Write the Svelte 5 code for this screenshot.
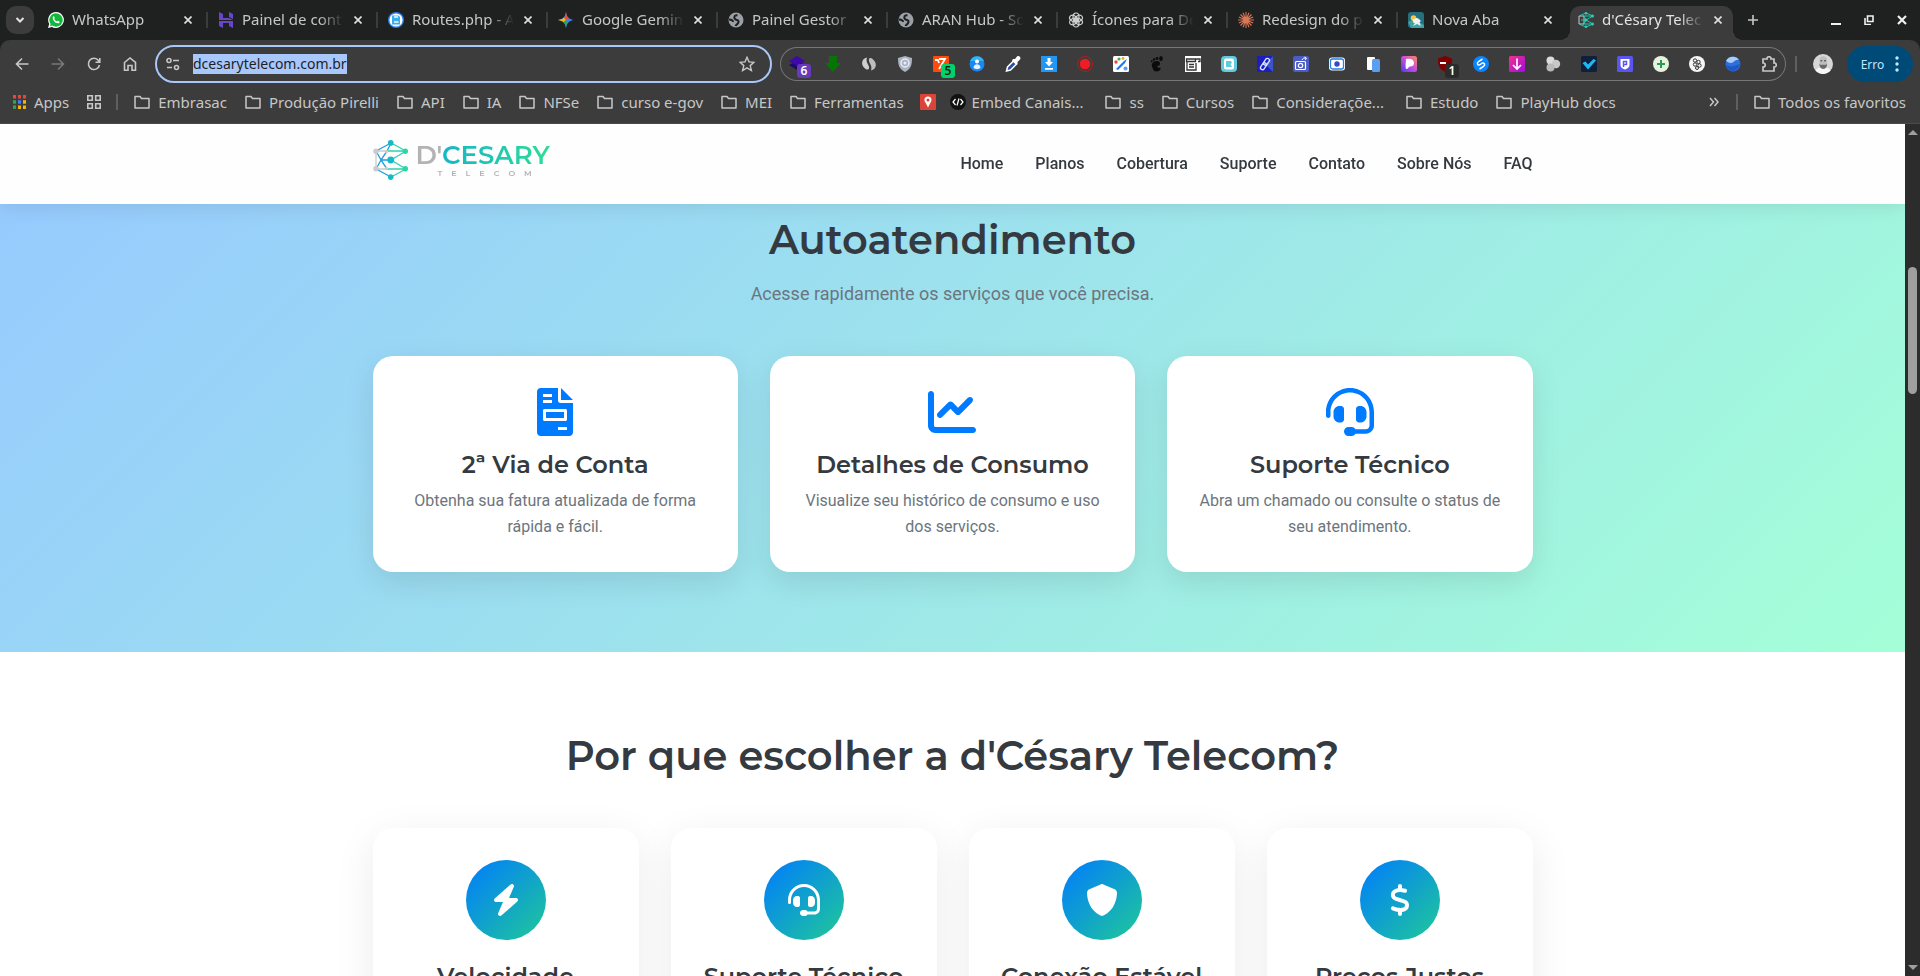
<script>
  import { onMount } from 'svelte';

  const globe =
    '<circle cx="8" cy="8" r="7.500" fill="#9aa0a6"/><path d="M9.500 3.500c-3-1-4 2-2.500 3.500s4 .5 3.500 3-2.500 2.500-3 4M1 7.500c2 0 4 .5 4 2.500" fill="none" stroke="#1f2020" stroke-width="2"/>';

  // 16x16 favicon markup per tab.
  const tabs = [
    {
      title: 'WhatsApp',
      icon: '<path d="M8 0a8 8 0 1 1-4 15L0 16l1.200-4A8 8 0 0 1 8 0z" fill="#fff"/><path d="M8 1.300A6.700 6.700 0 1 1 4.300 13.600l-2.400.6.700-2.300A6.700 6.700 0 0 1 8 1.300z" fill="#12b83c"/><path d="M5 4.500c1-1 1.500.7 1.800 1.600L6.200 7c.6 1.200 1.500 2 2.700 2.600l.9-.9c1 .4 2.600.9 1.600 2C9 13 3.500 8 5 4.500z" fill="#fff"/>'
    },
    {
      title: 'Painel de cont',
      icon: '<path d="M1 0l4 2v4h6l4 2H1zM11 0l4 2v5l-4-2zM1 9h14v7l-4-2v-3H5v5l-4-2z" fill="#6747c7"/>'
    },
    {
      title: 'Routes.php - A',
      icon: '<circle cx="8" cy="8" r="8" fill="#2b7de9"/><circle cx="8" cy="8" r="6.600" fill="#fff"/><path d="M4 3.500h6.500L12 5v7.500H4z" fill="#3aaee8"/><path d="M6 3.500h4V6H6zM6 9h4.500v2H6z" fill="#bfe6fa"/>'
    },
    {
      title: 'Google Gemin',
      icon: '<path d="M8 0c.8 5 3 7.200 8 8-5 .8-7.200 3-8 8-.8-5-3-7.200-8-8 5-.8 7.200-3 8-8z" fill="#3b82f6"/><path d="M8 0c.8 5 2 6 3 7L8 8 5 7c1-1 2.200-2 3-7z" fill="#ea4a3d"/><path d="M0 8c3-.5 4.500-1 6-2.500L8 8l-2 2.500C4.500 9 3 8.500 0 8z" fill="#f2b90f"/><path d="M8 16c-.5-3-1-4.500-2.500-6L8 8l1.500 3C8.500 13 8.300 14 8 16z" fill="#22a861"/>'
    },
    { title: 'Painel Gestor', icon: globe },
    { title: 'ARAN Hub - So', icon: globe },
    {
      title: 'Ícones para De',
      icon: '<g fill="none" stroke="#d0d0d0" stroke-width="1.200"><ellipse cx="8" cy="5" rx="3" ry="4"/><ellipse cx="8" cy="11" rx="3" ry="4"/><ellipse cx="5.400" cy="6.500" rx="3" ry="4" transform="rotate(-60 5.400 6.500)"/><ellipse cx="10.600" cy="9.500" rx="3" ry="4" transform="rotate(-60 10.600 9.500)"/><ellipse cx="5.400" cy="9.500" rx="3" ry="4" transform="rotate(60 5.400 9.500)"/><ellipse cx="10.600" cy="6.500" rx="3" ry="4" transform="rotate(60 10.600 6.500)"/></g>'
    },
    {
      title: 'Redesign do p',
      icon: '<path d="M8 0v16M0 8h16M2.500 2.500l11 11M13.500 2.500l-11 11M5 .8l6 14.400M11 .8L5 15.200M.8 5l14.400 6M15.200 5L.8 11" stroke="#d97757" stroke-width="1.100" fill="none"/>'
    },
    {
      title: 'Nova Aba',
      icon: '<rect width="16" height="16" rx="3" fill="#24707f"/><path d="M0 10l6-3 10 6v3H3z" fill="#3fa3a6"/><circle cx="5.500" cy="6" r="2.800" fill="#f6c544"/><path d="M5 9.500c-1-2 1-3 2-2.500 1-2 4-1 4 .5 2 0 2 2.500.5 3l1.500 3.500-4-2-4 2 2-3c-1 0-2-.5-2-1.500z" fill="#eef4f5"/>'
    },
    {
      title: "d'Césary Telec",
      active: true,
      icon: '<g fill="none" stroke-width="1"><path d="M1 4v8M1 4h5M1 12h5M6 4v8" stroke="#c9c9c9"/><path d="M8 1L1 4M8 1l7 3H6l2 4 7-4M8 8H3M8 15l-7-3M8 15l7-3H6l2-4 7 4" stroke="#1fc2b4"/></g><g fill="#27d3a4"><circle cx="8" cy="1.300" r="1.300"/><circle cx="14.500" cy="4" r="1.500"/><circle cx="14.500" cy="12" r="1.500"/><circle cx="8" cy="8" r="1.500"/><circle cx="8" cy="14.700" r="1.300"/></g>'
    }
  ];

  // 16x16 toolbar extension icons, left to right.
  const extensions = [
    { badge: '6', tone: 'violet', icon: '<path d="M0 9l8-4 8 4-8 5z" fill="#1c0a63"/><path d="M0 5l8-5 8 5-8 5z" fill="#3f08a8"/>' },
    { icon: '<path d="M4 0h8v7h4l-8 9-8-9h4z" fill="#067506"/>' },
    { icon: '<path d="M6 1.500C0 3 0 9 3.500 12c2 2 4 2 4.500.5C9 9 4 7 6 1.500z" fill="#cfcfcf"/><path d="M10 14.500C16 13 16 7 12.500 4c-2-2.500-4-2.500-4.500-1C7 7 12 9 10 14.500z" fill="#bdbdbd"/>' },
    { icon: '<path d="M8 0l7 2c0 7-1 11-7 14C2 13 1 9 1 2z" fill="#a9b3c2"/><circle cx="8" cy="7" r="4" fill="none" stroke="#e9edf3" stroke-width="1.500"/><circle cx="8" cy="7" r="1.500" fill="#e9edf3"/>' },
    { badge: '5', tone: 'green', icon: '<rect width="16" height="16" rx="1" fill="#ff4a0c"/><path d="M2 4h3l1 3M6 3h6L6 13" fill="none" stroke="#fff" stroke-width="1.800"/>' },
    { icon: '<circle cx="8" cy="8" r="7.500" fill="#1c86f2"/><path d="M1 5a7.500 7.500 0 0 1 14 0z" fill="#2fb4f7"/><circle cx="8" cy="5.500" r="2" fill="#fff"/><path d="M4.500 12c0-5 7-5 7 0-2 1.500-5 1.500-7 0z" fill="#e3f3ff"/>' },
    { icon: '<path d="M1.500 15l1-4 6-6 3 3-6 6z" fill="#2b4ea8" stroke="#fff" stroke-width="1.500"/><path d="M8 3l2 0 2-2.500c2-1.500 4.500 1 3 3L12.500 6v2l-1 1L7 4.500z" fill="#fff"/>' },
    { icon: '<rect width="16" height="16" fill="#2196f3"/><path d="M6.500 2h3v4H12l-4 4.500L4 6h2.500zM4 12h8v1.700H4z" fill="#fff"/>' },
    { icon: '<circle cx="8" cy="8" r="7.500" fill="none" stroke="#b31b1f" stroke-width="1"/><circle cx="8" cy="8" r="5.300" fill="#ee1d23"/>' },
    { icon: '<rect width="16" height="16" rx="1.500" fill="#fff"/><path d="M3 13l8-8 3-2-2 4-7 7z" fill="#1d74e8"/><circle cx="3" cy="6" r="1.700" fill="#e9483e"/><circle cx="6" cy="3" r="1.600" fill="#3fae49"/><circle cx="10" cy="2.500" r="1.400" fill="#f5a623"/><circle cx="12.500" cy="12.500" r="2" fill="#5b9cf5"/>' },
    { icon: '<path d="M3 8c1-3.500 8-4 8-.5S6.500 9 8.500 11s3.500-.5 3 2-6 4-7.500 0-1.500-3-1-5z" fill="#0b0b0b"/><ellipse cx="12" cy="2.500" rx="1.800" ry="2.500" fill="#0b0b0b"/><circle cx="8" cy="2.500" r="1.400" fill="#0b0b0b"/><circle cx="5" cy="3.500" r="1.200" fill="#0b0b0b"/><circle cx="2.700" cy="5.300" r="1" fill="#0b0b0b"/>' },
    { icon: '<rect width="16" height="16" fill="#fff"/><path d="M1.500 3h9v2.500h-9zM10.500 3H15v2.500h-2M2 6v8h9V7M4 8.500h5M4 11h5" fill="none" stroke="#333" stroke-width="1.300"/>' },
    { icon: '<rect width="16" height="16" rx="4" fill="#5fcbdc"/><rect x="3" y="2.500" width="10" height="11" rx="2" fill="#fff"/><path d="M5 5h5l1 2-1.500 1L11 11H5zM6.500 6.500h2" fill="#5fcbdc"/>' },
    { icon: '<rect width="16" height="16" fill="#1b1fc2"/><path d="M16 0v16L8 8z" fill="#3c54c9"/><g fill="none" stroke="#dfe6ff" stroke-width="1.300"><rect x="7.500" y="2" width="4" height="7.500" rx="2" transform="rotate(35 9.500 5.700)"/><rect x="4.500" y="6.500" width="4" height="7.500" rx="2" transform="rotate(35 6.500 10.200)"/></g>' },
    { icon: '<rect width="16" height="16" rx="2" fill="#4c5cc5"/><rect x="2.500" y="5.500" width="10" height="8" rx="1" fill="none" stroke="#fff" stroke-width="1.200"/><circle cx="7.500" cy="9.500" r="2.200" fill="none" stroke="#fff" stroke-width="1.200"/><path d="M9 4c1-2 2-2 4-2M11.500 1l2 1.200L12 4" fill="none" stroke="#fff"/>' },
    { icon: '<rect y="1.500" width="16" height="13" rx="3" fill="#fff"/><rect x="1.500" y="3" width="13" height="10" rx="2" fill="#fff" stroke="#2080e8" stroke-width="1.300"/><circle cx="8" cy="8" r="2.700" fill="#3b46c4"/>' },
    { icon: '<rect x="2" y="1" width="8" height="13" rx="1" fill="#fff"/><rect x="7" y="3" width="8" height="13" rx="1.500" fill="#5b9ef0"/>' },
    { icon: '<defs><linearGradient id="pp" x1="0" y1="1" x2="1" y2="0"><stop offset="0" stop-color="#4b3cf0"/><stop offset=".5" stop-color="#c74be0"/><stop offset="1" stop-color="#ff8a5c"/></linearGradient></defs><rect width="16" height="16" rx="2.500" fill="url(#pp)"/><path d="M5 3c4-1 8 0 8 4s-4 3-5 4-1 2-3 2c-1-3 0-7 0-10z" fill="#fff"/>' },
    { badge: '1', tone: 'dark', icon: '<path d="M8 0l7 2.500c0 7-1 10-7 13.500C2 12.500 1 9.500 1 2.500z" fill="#800000"/><path d="M3 6h6v2H3z" fill="#fff"/>' },
    { icon: '<circle cx="8" cy="8" r="8" fill="#0a84ff"/><path d="M9.500 3L5.500 5.500c-2 1.500-1 4 1 3.500M6.500 13l4-2.500c2-1.500 1-4-1-3.500L6.500 9" fill="none" stroke="#fff" stroke-width="1.500"/>' },
    { icon: '<defs><linearGradient id="dl" x2="1" y2="1"><stop stop-color="#f0338a"/><stop offset="1" stop-color="#a20ae0"/></linearGradient></defs><rect width="16" height="16" rx="1.500" fill="url(#dl)"/><path d="M8 2.500v10M4 9l4 4 4-4" fill="none" stroke="#fff" stroke-width="1.700"/>' },
    { icon: '<circle cx="5.500" cy="4.500" r="4" fill="#dcdcdc"/><circle cx="11" cy="8" r="4.200" fill="#c8c8c8"/><circle cx="5.500" cy="11.500" r="4" fill="#b9b9b9"/>' },
    { icon: '<rect width="16" height="16" rx="1.500" fill="#10203c"/><path d="M1.500 7l3-1.500L7 8.500 12.500 3l2.500 1.500-8 9z" fill="#1db8f2"/>' },
    { icon: '<rect width="16" height="16" rx="1.500" fill="#5a55ef"/><path d="M3.500 3h9v6c0 2-2 4-4.500 4.500C5 13 3.500 11 3.500 9z" fill="#fff"/><path d="M6.500 11V5.500h3V8.500h-3" fill="none" stroke="#5a55ef" stroke-width="1.500"/>' },
    { icon: '<circle cx="8" cy="8" r="8" fill="#e6f4dd"/><path d="M8 4v8M4 8h8" stroke="#2a9a5c" stroke-width="2"/>' },
    { icon: '<circle cx="8" cy="8" r="8" fill="#f5f5f5"/><g fill="none" stroke="#222" stroke-width=".9"><circle cx="6" cy="4.500" r="1.700"/><circle cx="9.500" cy="6" r="1.700"/><circle cx="6" cy="8.500" r="1.700"/><circle cx="10.500" cy="9.500" r="1.700"/><circle cx="8" cy="12" r="1.500"/></g>' },
    { icon: '<circle cx="8" cy="8" r="7.500" fill="#2e6fde"/><path d="M1 5c2-5 10-6 13-1-4-1-5 3-8 3-2 0-3-1-5-2z" fill="#a9cdfb"/><path d="M1 9c4 2 7 2 14-1-1 8-12 10-14 1z" fill="#1f57c4"/>' },
    { icon: '<path d="M2 3h4c-.5-3 4.500-3 4 0h3v4c3-.5 3 4.500 0 4v4H2v-4c3 0 3-4 0-4z" fill="none" stroke="#c7c7c7" stroke-width="1.700"/>' }
  ];

  const bookmarks = [
    { label: 'Embrasac' },
    { label: 'Produção Pirelli' },
    { label: 'API' },
    { label: 'IA' },
    { label: 'NFSe' },
    { label: 'curso e-gov' },
    { label: 'MEI' },
    { label: 'Ferramentas' },
    { label: '', icon: 'pin' },
    { label: 'Embed Canais...', icon: 'embed', truncated: true },
    { label: 'ss' },
    { label: 'Cursos' },
    { label: 'Consideraçõe...', truncated: true },
    { label: 'Estudo' },
    { label: 'PlayHub docs' }
  ];

  const nav = ['Home', 'Planos', 'Cobertura', 'Suporte', 'Contato', 'Sobre Nós', 'FAQ'];

  const headset =
    'M256 48C141.100 48 48 141.100 48 256v40c0 13.300-10.700 24-24 24s-24-10.700-24-24V256C0 114.600 114.600 0 256 0S512 114.600 512 256V400.100c0 48.600-39.400 88-88.100 88L313.600 488c-8.300 14.300-23.800 24-41.600 24H240c-26.500 0-48-21.500-48-48s21.500-48 48-48h32c17.800 0 33.300 9.700 41.600 24l110.400 .1c22.100 0 40-17.900 40-40V256c0-114.900-93.100-208-208-208zM144 192h16c17.700 0 32 14.300 32 32V336c0 17.700-14.300 32-32 32H144c-35.300 0-64-28.700-64-64V256c0-35.300 28.700-64 64-64zm224 0c35.300 0 64 28.700 64 64v48c0 35.300-28.700 64-64 64H352c-17.700 0-32-14.300-32-32V224c0-17.700 14.300-32 32-32h16z';

  const services = [
    {
      title: '2ª Via de Conta',
      text: 'Obtenha sua fatura atualizada de forma rápida e fácil.',
      box: '0 0 384 512',
      path: 'M288 256H96v64h192v-64zM384 128L256 0v128h128zM224 136V0H40C18 0 0 18 0 40v432c0 22 18 40 40 40h304c22 0 40-18 40-40V160H248c-13.200 0-24-10.800-24-24zM64 64h96v32H64zM64 128h96v32H64zM320 448h-96v-32h96zM320 240v96c0 8.840-7.160 16-16 16H80c-8.840 0-16-7.160-16-16v-96c0-8.840 7.160-16 16-16h224c8.840 0 16 7.160 16 16z'
    },
    {
      title: 'Detalhes de Consumo',
      text: 'Visualize seu histórico de consumo e uso dos serviços.',
      box: '0 0 512 512',
      path: 'M64 64c0-17.700-14.300-32-32-32S0 46.300 0 64V400c0 44.200 35.800 80 80 80H480c17.700 0 32-14.300 32-32s-14.300-32-32-32H80c-8.800 0-16-7.200-16-16V64zm406.600 86.600c12.500-12.500 12.500-32.800 0-45.300s-32.800-12.500-45.300 0L320 210.700l-57.400-57.400c-12.500-12.500-32.800-12.500-45.300 0l-112 112c-12.500 12.500-12.500 32.800 0 45.300s32.800 12.500 45.300 0L240 221.300l57.400 57.400c12.500 12.500 32.800 12.500 45.300 0l128-128z'
    },
    {
      title: 'Suporte Técnico',
      text: 'Abra um chamado ou consulte o status de seu atendimento.',
      box: '0 0 512 512',
      path: headset
    }
  ];

  const reasons = [
    {
      title: 'Velocidade',
      box: '0 0 448 512',
      path: 'M349.400 44.600c5.900-13.700 1.500-29.700-10.600-38.500s-28.600-8-39.900 1.800l-256 224c-10 8.800-13.600 22.900-8.900 35.300S50.700 288 64 288H175.500L98.600 467.400c-5.900 13.700-1.500 29.700 10.600 38.500s28.600 8 39.900-1.800l256-224c10-8.800 13.600-22.900 8.900-35.300s-16.600-20.700-30-20.700H272.500L349.400 44.600z'
    },
    { title: 'Suporte Técnico', box: '0 0 512 512', path: headset },
    {
      title: 'Conexão Estável',
      box: '0 0 512 512',
      path: 'M269.400 2.900C265.200 1 260.700 0 256 0s-9.200 1-13.400 2.900L54.300 82.800c-22 9.300-38.400 31-38.300 57.200c.5 99.200 41.300 280.700 213.600 363.200c16.700 8 36.100 8 52.800 0C454.700 420.700 495.500 239.200 496 140c.1-26.200-16.300-47.900-38.300-57.200L269.400 2.900z'
    },
    {
      title: 'Preços Justos',
      box: '0 0 320 512',
      path: 'M160 0c17.700 0 32 14.300 32 32V67.700c1.600 .2 3.100 .4 4.700 .7c.4 .1 .7 .1 1.100 .2l48 8.800c17.400 3.200 28.900 19.900 25.700 37.200s-19.900 28.900-37.200 25.700l-47.500-8.700c-31.300-4.600-58.900-1.500-78.300 6.200s-27.200 18.300-29 28.100c-2 10.700-.5 16.700 1.200 20.400c1.800 3.900 5.500 8.300 12.800 13.200c16.300 10.700 41.300 17.700 73.700 26.300l2.900 .8c28.600 7.600 63.600 16.800 89.600 33.800c14.200 9.300 27.600 21.900 35.900 39.500c8.500 17.900 10.300 37.900 6.400 59.200c-6.900 38-33.100 63.400-65.600 76.700c-13.700 5.600-28.600 9.200-44.400 11V480c0 17.700-14.300 32-32 32s-32-14.300-32-32V445.100c-.4-.1-.9-.1-1.300-.2l-.2 0c-24.400-3.800-64.500-14.300-91.500-26.300c-16.100-7.200-23.400-26.100-16.200-42.200s26.100-23.400 42.200-16.200c20.900 9.300 55.300 18.500 75.200 21.600c31.900 4.700 58.200 2 76-5.300c16.900-6.900 24.600-16.900 26.800-28.900c1.900-10.600 .4-16.700-1.300-20.400c-1.900-4-5.600-8.400-13-13.300c-16.400-10.700-41.500-17.700-74-26.300l-2.800-.7C119.400 279.300 84.400 270 58.400 253c-14.200-9.300-27.500-22-35.800-39.600c-8.400-17.900-10.100-37.900-6.100-59.200C23.700 116 52.300 91.200 84.800 78.300c13.300-5.300 27.900-8.900 43.200-11V32c0-17.700 14.300-32 32-32z'
    }
  ];

  let url = $state('dcesarytelecom.com.br');
  let urlInput;

  onMount(() => {
    urlInput.focus();
    urlInput.select();
  });
</script>

{#snippet folder()}
  <svg width="16" height="16" viewBox="0 0 16 16" aria-hidden="true">
    <path d="M1 2.500h5l1.500 2H15v9.500H1z" fill="none" stroke="#c7c7c7" stroke-width="1.500" stroke-linejoin="round" />
  </svg>
{/snippet}

<div class="window">
  <div class="tabstrip">
    <button class="tab-search" type="button" aria-label="Pesquisar guias">
      <svg width="10" height="10" viewBox="0 0 10 10"><path d="M1.500 3L5 6.500 8.500 3" fill="none" stroke="#e3e3e3" stroke-width="2" /></svg>
    </button>
    {#each tabs as tab}
      <div class="tab" class:active={tab.active}>
        <svg class="favicon" width="16" height="16" viewBox="0 0 16 16" aria-hidden="true">{@html tab.icon}</svg>
        <button class="tab-title" type="button">{tab.title}</button>
        <button class="tab-close" type="button" aria-label="Fechar guia">
          <svg width="8" height="8" viewBox="0 0 8 8"><path d="M.5.500l7 7M7.500.500l-7 7" stroke="currentColor" stroke-width="1.700" /></svg>
        </button>
      </div>
    {/each}
    <button class="new-tab" type="button" aria-label="Nova guia">
      <svg width="10" height="10" viewBox="0 0 10 10"><path d="M5 0v10M0 5h10" stroke="#c7c7c7" stroke-width="1.600" /></svg>
    </button>
    <div class="window-controls">
      <button type="button" aria-label="Minimizar">
        <svg width="10" height="10" viewBox="0 0 10 10"><path d="M0 9h10" stroke="#f1f1f1" stroke-width="2" /></svg>
      </button>
      <button type="button" aria-label="Restaurar">
        <svg width="10" height="10" viewBox="0 0 10 10"><path d="M3.500 1H9v5.500H3.500zM1 3v6.500h6" fill="none" stroke="#f1f1f1" stroke-width="1.600" /></svg>
      </button>
      <button type="button" aria-label="Fechar">
        <svg width="10" height="10" viewBox="0 0 10 10"><path d="M1 1l8 8M9 1L1 9" stroke="#f1f1f1" stroke-width="2.200" /></svg>
      </button>
    </div>
  </div>

  <div class="chrome">
    <div class="toolbar">
      <div class="nav-buttons">
        <button type="button" aria-label="Voltar">
          <svg width="14" height="14" viewBox="0 0 14 14"><path d="M13.500 7H1.500M7 1.500L1.500 7 7 12.500" fill="none" stroke="#c7c7c7" stroke-width="1.600" /></svg>
        </button>
        <button type="button" aria-label="Avançar" disabled>
          <svg width="14" height="14" viewBox="0 0 14 14"><path d="M.5 7h12M7 1.500L12.500 7 7 12.500" fill="none" stroke="#777" stroke-width="1.600" /></svg>
        </button>
        <button type="button" aria-label="Recarregar">
          <svg width="14" height="14" viewBox="0 0 14 14"><path d="M12.500 8A5.600 5.600 0 1 1 11.500 3.500L12.500 5M12.800 1v4.300H8.500" fill="none" stroke="#c7c7c7" stroke-width="1.600" /></svg>
        </button>
        <button type="button" aria-label="Página inicial">
          <svg width="14" height="14" viewBox="0 0 14 14"><path d="M1.500 5.500L7 1l5.500 4.500v7.700H9V8.500H5v4.700H1.500z" fill="none" stroke="#c7c7c7" stroke-width="1.600" /></svg>
        </button>
      </div>

      <div class="omnibox">
        <svg width="14" height="14" viewBox="0 0 14 14" aria-hidden="true">
          <g fill="none" stroke="#c7c7c7" stroke-width="1.600"><circle cx="3" cy="3.500" r="2" /><path d="M7 3.500h6M1 10.500h5" /><circle cx="10.500" cy="10.500" r="2" /></g>
        </svg>
        <input type="text" aria-label="Endereço" bind:value={url} bind:this={urlInput} />
        <button type="button" aria-label="Adicionar aos favoritos">
          <svg width="16" height="16" viewBox="0 0 16 16"><path d="M8 1.300l2 4.600 5 .4-3.800 3.300 1.200 4.900L8 11.900l-4.400 2.600 1.200-4.900L1 6.300l5-.4z" fill="none" stroke="#c7c7c7" stroke-width="1.400" /></svg>
        </button>
      </div>

      <div class="extensions">
        {#each extensions as ext, i}
          <button type="button" aria-label="Extensão {i + 1}">
            <svg width="16" height="16" viewBox="0 0 16 16">{@html ext.icon}</svg>
            {#if ext.badge}<span class="badge {ext.tone}">{ext.badge}</span>{/if}
          </button>
        {/each}
      </div>

      <span class="divider"></span>
      <button class="avatar" type="button" aria-label="Perfil">
        <svg width="20" height="20" viewBox="0 0 20 20">
          <circle cx="10" cy="10" r="10" fill="#d6d6d6" />
          <path d="M2.500 16.500c2-3 4-3 7.500-3s6 0 7.500 3a10 10 0 0 1-15 0z" fill="#f6f6f6" />
          <path d="M6.500 6c0-5 7.500-5 7.500 0v4.500c0 6-7.500 6-7.500 0z" fill="#bdbdbd" />
          <path d="M6.500 9.500c1 2 2 1.300 3.700 1.300s2.800.7 3.800-1.300c.5 7-8 7-7.500 0z" fill="#6a6a6a" />
          <path d="M7.300 6.800h2M11 6.800h2" stroke="#444" stroke-width="1" />
        </svg>
      </button>
      <button class="error-chip" type="button">
        Erro
        <svg width="4" height="16" viewBox="0 0 4 16" aria-hidden="true"><g fill="#c2e7ff"><circle cx="2" cy="2" r="1.700" /><circle cx="2" cy="8" r="1.700" /><circle cx="2" cy="14" r="1.700" /></g></svg>
      </button>
    </div>

    <div class="bookmarks">
      <a class="bookmark" href="#apps">
        <svg width="13" height="14" viewBox="0 0 13 14" aria-hidden="true">
          <path d="M0 0h3v3.500H0zM5 0h3v3.500H5zM10 0h3v3.500h-3z" fill="#e8453c" />
          <path d="M0 5.200h3v3.500H0z" fill="#2fa655" /><path d="M5 5.200h3v3.500H5z" fill="#3b82f6" /><path d="M10 5.200h3v3.500h-3z" fill="#f5b400" />
          <path d="M0 10.400h3v3.500H0z" fill="#2fa655" /><path d="M5 10.400h3v3.500H5zM10 10.400h3v3.500h-3z" fill="#f5b400" />
        </svg>
        Apps
      </a>
      <button class="grid-button" type="button" aria-label="Grupos de guias">
        <svg width="14" height="14" viewBox="0 0 14 14"><path d="M.8.800h4.500v4.500H.8zM8.700.800h4.500v4.500H8.700zM.8 8.700h4.500v4.500H.8zM8.700 8.700h4.500v4.500H8.700z" fill="none" stroke="#c7c7c7" stroke-width="1.600" /></svg>
      </button>
      <span class="divider"></span>
      <nav class="bookmark-list" aria-label="Favoritos">
        {#each bookmarks as item}
          <a
            class="bookmark"
            class:site={item.icon}
            class:truncated={item.truncated}
            href="#favorito"
            aria-label={item.label || 'Mapa'}
          >
            {#if item.icon === 'pin'}
              <svg width="16" height="16" viewBox="0 0 16 16"><rect width="16" height="16" rx="1" fill="#db4437" /><path d="M8 2.500c4 0 4.500 4 2 7L8 13.500 6 9.500c-2.500-3-2-7 2-7z" fill="#fff" /><circle cx="8" cy="6" r="1.500" fill="#db4437" /></svg>
            {:else if item.icon === 'embed'}
              <svg width="16" height="16" viewBox="0 0 16 16"><circle cx="8" cy="8" r="8" fill="#111" /><path d="M5.500 5L3 8l2.500 3M10.500 5L13 8l-2.500 3M9 4.500l-2 7" fill="none" stroke="#fff" stroke-width="1.200" /></svg>
            {:else}
              {@render folder()}
            {/if}
            {item.label}
          </a>
        {/each}
      </nav>
      <button class="more" type="button" aria-label="Mais favoritos">
        <svg width="10" height="10" viewBox="0 0 10 10"><path d="M1 1l3.500 4L1 9M5.500 1L9 5 5.500 9" fill="none" stroke="#c7c7c7" stroke-width="1.500" /></svg>
      </button>
      <span class="divider"></span>
      <a class="bookmark all" href="#todos">{@render folder()}Todos os favoritos</a>
    </div>
  </div>

  <div class="viewport">
    <div class="page">
      <header class="site-header">
        <div class="container header-row">
          <a class="logo" href="#home">
            <svg width="35" height="40" viewBox="0 0 35 40" aria-hidden="true">
              <g fill="none" stroke-width="1.300">
                <path d="M3 11v18M3 11h11M3 29h11M14 11l-6 9 6 9" stroke="#cbcbcb" />
                <path d="M3 11L18 3M3 29l15 8M8 20h10M3 11l5 9-5 9M14 11L8 20l6 9M14 11L18 3" stroke="#1a9fe0" />
                <path d="M18 3l15 8H14M18 20l15-9M18 37l15-8H14M18 20l15 9" stroke="#2fcfae" />
              </g>
              <g fill="#cbcbcb"><circle cx="3" cy="11.300" r="2.700" /><circle cx="3" cy="28.700" r="2.700" /><circle cx="13.500" cy="11.500" r="1.700" /><circle cx="13.500" cy="28.500" r="1.700" /></g>
              <g fill="#17b9c8"><circle cx="17.700" cy="2.900" r="2.800" /><circle cx="17.700" cy="20" r="3.400" /><circle cx="17.700" cy="37.100" r="2.800" /></g>
              <g fill="#2bd6a0"><circle cx="32.300" cy="11.300" r="2.700" /><circle cx="32.300" cy="28.700" r="2.700" /></g>
            </svg>
            <span class="wordmark">
              <span class="brand"><span class="brand-d">D'</span><span class="brand-name">CESARY</span></span>
              <span class="tagline">{#each 'TELECOM' as letter}<span>{letter}</span>{/each}</span>
            </span>
          </a>
          <nav class="site-nav">
            {#each nav as item}<a href="#{item}">{item}</a>{/each}
          </nav>
        </div>
      </header>

      <section class="self-service">
        <div class="container">
          <h2>Autoatendimento</h2>
          <p class="subtitle">Acesse rapidamente os serviços que você precisa.</p>
          <div class="grid three">
            {#each services as service}
              <article class="card">
                <svg class="service-icon" height="48" viewBox={service.box} aria-hidden="true">
                  <path d={service.path} fill="#007bff" fill-rule="evenodd" />
                </svg>
                <h3>{service.title}</h3>
                <p>{service.text}</p>
              </article>
            {/each}
          </div>
        </div>
      </section>

      <section class="reasons">
        <div class="container">
          <h2>Por que escolher a d'Césary Telecom?</h2>
          <div class="grid four">
            {#each reasons as reason}
              <article class="card">
                <div class="round">
                  <svg height="32" viewBox={reason.box} aria-hidden="true"><path d={reason.path} fill="#fff" /></svg>
                </div>
                <h3>{reason.title}</h3>
              </article>
            {/each}
          </div>
        </div>
      </section>
    </div>
    <div class="scrollbar" aria-hidden="true">
      <span class="arrow up"></span>
      <span class="track"><span class="thumb"></span></span>
      <span class="arrow down"></span>
    </div>
  </div>
</div>

<style>
  :global(body) {
    margin: 0;
    overflow: hidden;
  }
  .window {
    display: flex;
    flex-direction: column;
    height: 100vh;
    background: #1f2020;
    font-family: 'Noto Sans', sans-serif;
    font-size: 15px;
    color: #c7c7c7;
  }
  .window *,
  .window *::after,
  .window *::before {
    box-sizing: border-box;
  }
  button {
    appearance: none;
    border: none;
    background: none;
    padding: 0;
    color: inherit;
    font: inherit;
    display: flex;
    align-items: center;
    justify-content: center;
  }
  a {
    color: inherit;
    text-decoration: none;
  }
  svg {
    flex: none;
    display: block;
  }

  /* Tab strip */
  .tabstrip {
    display: flex;
    align-items: center;
    height: 40px;
    padding-left: 6px;
  }
  .tab-search {
    width: 28px;
    height: 28px;
    margin-right: 3px;
    border-radius: 10px;
    background: #3c3c3c;
  }
  .tab {
    position: relative;
    display: flex;
    align-items: center;
    width: 170px;
    height: 40px;
    padding: 0 11px;
    isolation: isolate;
  }
  .tab::after {
    content: '';
    position: absolute;
    right: -1px;
    top: 12px;
    width: 2px;
    height: 16px;
    background: #3c3c3c;
  }
  .tab:nth-last-child(-n + 4)::after {
    display: none;
  }
  .tab.active::before {
    content: '';
    position: absolute;
    z-index: -1;
    inset: 6px 4px 0 3px;
    border-radius: 10px 10px 0 0;
    background: #3c3c3c;
  }
  .tab.active::after {
    display: block;
    z-index: -1;
    top: auto;
    bottom: 0;
    left: -7px;
    right: -6px;
    width: auto;
    height: 10px;
    background:
      radial-gradient(circle at 0 0, transparent 10px, #3c3c3c 10px) left / 10px 10px no-repeat,
      radial-gradient(circle at 100% 0, transparent 10px, #3c3c3c 10px) right / 10px 10px no-repeat;
  }
  .tab-title {
    flex: 1;
    min-width: 0;
    justify-content: flex-start;
    margin: 0 4px 0 8px;
    padding-bottom: 2px;
    white-space: nowrap;
    mask-image: linear-gradient(90deg, #000 74%, transparent 98%);
  }
  .tab.active .tab-title {
    color: #e3e3e3;
  }
  .tab-close {
    width: 16px;
    height: 16px;
    color: #dedede;
  }
  .new-tab {
    width: 16px;
    height: 28px;
    margin-left: 8px;
  }
  .window-controls {
    display: flex;
    gap: 23px;
    margin-left: auto;
    padding-right: 13px;
  }

  /* Toolbar */
  .chrome {
    background: #3c3c3c;
    border-radius: 10px 10px 0 0;
    padding-bottom: 7px;
    border-bottom: 1px solid #4a4a4a;
  }
  .toolbar {
    display: flex;
    align-items: center;
    height: 48px;
    padding: 0 7px 0 10px;
  }
  .nav-buttons {
    display: flex;
    gap: 12px;
  }
  .nav-buttons button {
    width: 24px;
    height: 24px;
  }
  .omnibox {
    flex: 1;
    display: flex;
    align-items: center;
    gap: 13px;
    min-width: 0;
    height: 38px;
    margin: 0 8px 0 13px;
    padding: 0 15px 0 9px;
    border: 2px solid #a8c7fa;
    border-radius: 19px;
  }
  .omnibox input {
    flex: 1;
    min-width: 0;
    padding: 0;
    border: none;
    outline: none;
    background: none;
    color: #e3e3e3;
    font: 14px/20px 'Noto Sans', sans-serif;
  }
  .omnibox input::selection {
    background: #a8c7fa;
    color: #1f1f1f;
  }
  .extensions {
    display: flex;
    gap: 2px;
    height: 34px;
    border-radius: 17px;
    box-shadow: inset 0 0 0 1px #757575;
  }
  .extensions button {
    position: relative;
    width: 34px;
  }
  .badge {
    position: absolute;
    left: 17px;
    top: 17px;
    width: 14px;
    height: 14px;
    border-radius: 3px;
    color: #fff;
    font-size: 12px;
    font-weight: 600;
    line-height: 14px;
    text-align: center;
  }
  .violet {
    background: #673ab7;
  }
  .green {
    background: #00d26a;
    color: #1b1b1b;
  }
  .dark {
    background: #2b2b2b;
  }
  .divider {
    flex: none;
    width: 2px;
    height: 16px;
    background: #5f5f5f;
  }
  .toolbar .divider {
    margin-left: 9px;
  }
  .avatar {
    margin: 0 14px 0 16px;
  }
  .error-chip {
    gap: 11px;
    width: 66px;
    height: 36px;
    border-radius: 18px;
    background: #004a77;
    color: #c2e7ff;
    font-size: 12px;
  }

  /* Bookmarks bar */
  .bookmarks {
    display: flex;
    align-items: center;
    height: 28px;
    padding: 0 14px 0 13px;
    white-space: nowrap;
  }
  .bookmark {
    display: flex;
    align-items: center;
    gap: 8px;
  }
  .bookmark.site {
    gap: 6px;
    margin: 0 -2px;
  }
  .bookmark.truncated {
    margin-right: 4px;
  }
  .grid-button {
    margin: 0 15px 0 18px;
  }
  .bookmark-list {
    display: flex;
    gap: 18px;
    margin: 0 auto 0 16px;
  }
  .more {
    margin-right: 17px;
  }
  .bookmark.all {
    margin-left: 16px;
  }

  /* Page area */
  .viewport {
    flex: 1;
    display: flex;
    min-height: 0;
    overflow: hidden;
    background: #fff;
  }
  .page {
    flex: 1;
    min-width: 0;
    height: 100%;
    overflow: hidden;
    background: #fff;
    color: #343a40;
    font-family: Roboto, sans-serif;
    font-size: 16px;
    line-height: 26px;
  }
  .container {
    max-width: 1160px;
    margin: 0 auto;
  }
  .site-header {
    position: sticky;
    top: 0;
    z-index: 1;
    height: 80px;
    margin-bottom: -68px;
    background: #fefefe;
    box-shadow: 0 2px 20px rgba(0, 0, 0, 0.1);
  }
  .header-row {
    display: flex;
    align-items: center;
    justify-content: space-between;
    height: 80px;
  }
  .logo {
    display: flex;
    gap: 8px;
    padding-bottom: 8px;
  }
  .wordmark {
    display: flex;
    flex-direction: column;
    padding-top: 3px;
    font-family: Montserrat, sans-serif;
    color: #b3b3b3;
  }
  .brand {
    font-size: 26px;
    font-weight: 600;
    line-height: 24px;
  }
  .brand-name {
    background: linear-gradient(90deg, #17b5c9, #2edc95);
    background-clip: text;
    color: transparent;
  }
  .tagline {
    display: flex;
    justify-content: space-between;
    margin: 0 18px 0 22px;
    font-size: 8px;
    font-weight: 600;
    line-height: 12px;
  }
  .site-nav {
    display: flex;
    gap: 32px;
    font-weight: 500;
  }
  h2,
  h3 {
    margin: 0;
    font-family: Montserrat, sans-serif;
    font-weight: 600;
    text-align: center;
  }
  h2 {
    font-size: 40px;
    line-height: 48px;
  }
  h3 {
    font-size: 24px;
    line-height: 28px;
  }
  .self-service {
    padding: 80px 0;
    background: linear-gradient(135deg, #96c9ff, #a4ffd8);
  }
  .subtitle {
    margin: 16px 0 48px;
    color: #6c757d;
    font-size: 18px;
    line-height: 28px;
    text-align: center;
  }
  .grid {
    display: grid;
    gap: 32px;
  }
  .three {
    grid-template-columns: repeat(3, 1fr);
  }
  .four {
    grid-template-columns: repeat(4, 1fr);
  }
  .card {
    display: flex;
    flex-direction: column;
    align-items: center;
    padding: 32px;
    border-radius: 20px;
    background: #fff;
    box-shadow: 0 10px 30px rgba(0, 0, 0, 0.1);
    text-align: center;
  }
  .card h3 {
    margin: 15px 0 9px;
    white-space: nowrap;
  }
  .card p {
    margin: 0;
    color: #6c757d;
  }
  .reasons {
    padding: 80px 0;
    background: #fff;
  }
  .reasons h2 {
    margin-bottom: 48px;
  }
  .reasons .card {
    min-height: 280px;
    box-shadow: 0 10px 40px rgba(0, 0, 0, 0.08);
  }
  .reasons .card h3 {
    margin-top: 23px;
  }
  .round {
    display: flex;
    align-items: center;
    justify-content: center;
    width: 80px;
    height: 80px;
    border-radius: 50%;
    background: linear-gradient(135deg, #007bff, #20c997);
  }

  .scrollbar {
    display: flex;
    flex-direction: column;
    align-items: center;
    width: 15px;
    padding: 6px 0;
    background: #2c2c2c;
  }
  .track {
    flex: 1;
    padding-top: 132px;
  }
  .thumb {
    display: block;
    width: 9px;
    height: 127px;
    border-radius: 5px;
    background: #9f9f9f;
  }
  .arrow {
    border: 5px solid transparent;
  }
  .up {
    border-top: none;
    border-bottom-color: #9f9f9f;
  }
  .down {
    border-bottom: none;
    border-top-color: #9f9f9f;
  }
</style>
